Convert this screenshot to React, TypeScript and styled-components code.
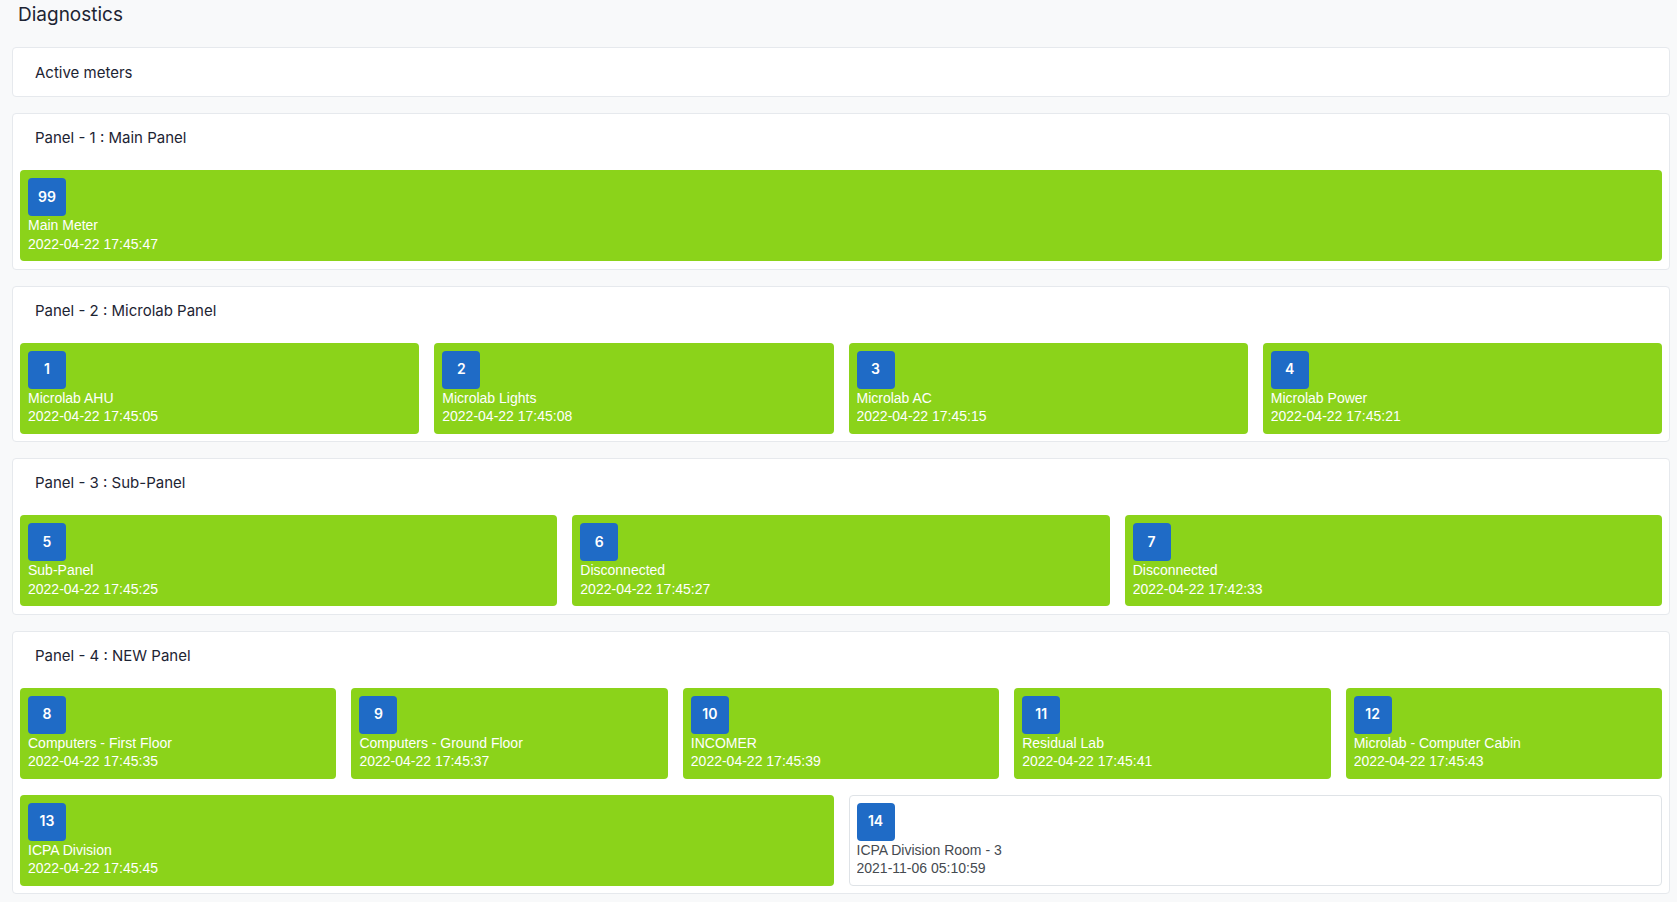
import React from "react";
import styled, { createGlobalStyle } from "styled-components";

const GlobalStyle = createGlobalStyle`
  html, body { margin: 0; padding: 0; }
  body {
    background: #f8f9fa;
    font-family: Inter, "Noto Sans", sans-serif;
    color: #212529;
  }
  * { box-sizing: border-box; }
`;

const Page = styled.div`
  padding: 0 7px 12px 12px;
`;

const Heading = styled.h1`
  margin: 0 0 17px 6px;
  font-size: 19px;
  font-weight: 400;
  line-height: 30px;
  color: #1d2433;
`;

const Stack = styled.div`
  display: flex;
  flex-direction: column;
  gap: 16px;
`;

const ActiveCard = styled.div`
  height: 50px;
  display: flex;
  align-items: center;
  padding: 0 22px;
  background: #fff;
  border: 1px solid #e6e9ed;
  border-radius: 4px;
  font-size: 15px;
  color: #1d2433;
`;

const Panel = styled.section`
  background: #fff;
  border: 1px solid #e6e9ed;
  border-radius: 4px;
  padding: 7px 7px 7.5px;
`;

const PanelTitle = styled.div`
  padding: 5px 15px 0;
  line-height: 24px;
  font-size: 15px;
  color: #1d2433;
  margin-bottom: 20px;
`;

const Rows = styled.div`
  display: flex;
  flex-direction: column;
  gap: 16px;
`;

const Row = styled.div`
  display: flex;
  gap: 15px;
`;

const Meter = styled.div<{ $online: boolean }>`
  flex: 1 1 0;
  min-width: 0;
  height: 91px;
  padding: ${(p) => (p.$online ? "8px" : "7px")};
  border-radius: 4px;
  background: ${(p) => (p.$online ? "#8bd31a" : "#ffffff")};
  border: ${(p) => (p.$online ? "none" : "1px solid #dfe3e7")};
  color: ${(p) => (p.$online ? "#ffffff" : "#454a50")};
  font-family: "Liberation Sans", Arial, sans-serif;
  font-size: 14px;
  line-height: 18.5px;
`;

const Badge = styled.div`
  width: 38px;
  height: 38px;
  border-radius: 4px;
  background: #1f6bc6;
  color: #fff;
  display: flex;
  align-items: center;
  justify-content: center;
  font-family: Inter, sans-serif;
  font-weight: 600;
  font-size: 14px;
`;

const Line = styled.div`
  white-space: nowrap;
  overflow: hidden;
  text-overflow: ellipsis;
`;

type MeterData = { id: number; name: string; time: string; online?: boolean };

const panels: { title: string; rows: MeterData[][] }[] = [
  {
    title: "Panel - 1 : Main Panel",
    rows: [[{ id: 99, name: "Main Meter", time: "2022-04-22 17:45:47" }]],
  },
  {
    title: "Panel - 2 : Microlab Panel",
    rows: [
      [
        { id: 1, name: "Microlab AHU", time: "2022-04-22 17:45:05" },
        { id: 2, name: "Microlab Lights", time: "2022-04-22 17:45:08" },
        { id: 3, name: "Microlab AC", time: "2022-04-22 17:45:15" },
        { id: 4, name: "Microlab Power", time: "2022-04-22 17:45:21" },
      ],
    ],
  },
  {
    title: "Panel - 3 : Sub-Panel",
    rows: [
      [
        { id: 5, name: "Sub-Panel", time: "2022-04-22 17:45:25" },
        { id: 6, name: "Disconnected", time: "2022-04-22 17:45:27" },
        { id: 7, name: "Disconnected", time: "2022-04-22 17:42:33" },
      ],
    ],
  },
  {
    title: "Panel - 4 : NEW Panel",
    rows: [
      [
        { id: 8, name: "Computers - First Floor", time: "2022-04-22 17:45:35" },
        { id: 9, name: "Computers - Ground Floor", time: "2022-04-22 17:45:37" },
        { id: 10, name: "INCOMER", time: "2022-04-22 17:45:39" },
        { id: 11, name: "Residual Lab", time: "2022-04-22 17:45:41" },
        { id: 12, name: "Microlab - Computer Cabin", time: "2022-04-22 17:45:43" },
      ],
      [
        { id: 13, name: "ICPA Division", time: "2022-04-22 17:45:45" },
        { id: 14, name: "ICPA Division Room - 3", time: "2021-11-06 05:10:59", online: false },
      ],
    ],
  },
];

export default function App() {
  return (
    <Page>
      <GlobalStyle />
      <Heading>Diagnostics</Heading>
      <Stack>
        <ActiveCard>Active meters</ActiveCard>
        {panels.map((panel) => (
          <Panel key={panel.title}>
            <PanelTitle>{panel.title}</PanelTitle>
            <Rows>
              {panel.rows.map((row, i) => (
                <Row key={i}>
                  {row.map((m) => (
                    <Meter key={m.id} $online={m.online !== false}>
                      <Badge>{m.id}</Badge>
                      <Line>{m.name}</Line>
                      <Line>{m.time}</Line>
                    </Meter>
                  ))}
                </Row>
              ))}
            </Rows>
          </Panel>
        ))}
      </Stack>
    </Page>
  );
}
